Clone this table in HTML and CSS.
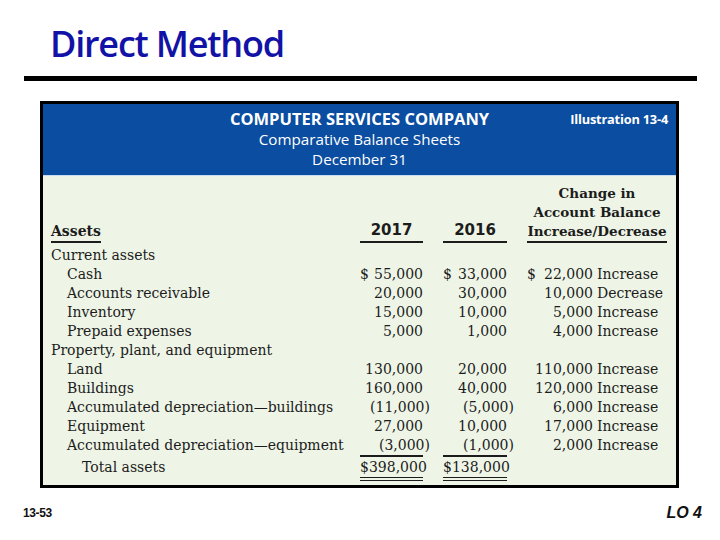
FILE: index.html
```html
<!DOCTYPE html>
<html>
<head>
<meta charset="utf-8">
<link rel="stylesheet" href="styles.css">
</head>
<body>
<div class="slide">
  <h1 class="title">Direct Method</h1>
  <div class="rule"></div>
  <div class="panel">
    <div class="panel-head">
      <div class="head-side"></div>
      <div class="company">
        <div class="co-name">COMPUTER SERVICES COMPANY</div>
        <div class="co-sub">Comparative Balance Sheets</div>
        <div class="co-sub">December 31</div>
      </div>
      <div class="head-side illus">Illustration 13-4</div>
    </div>
    <div class="sheet">
      <div class="hcell label-head"><span class="assets">Assets</span></div>
      <div class="hcell year">2017</div>
      <div class="hcell year">2016</div>
      <div class="hcell change-head"><span class="ch-text">Change in<br>Account Balance<br>Increase/Decrease</span></div>

      <div class="lbl">Current assets</div><div></div><div></div><div></div>

      <div class="lbl ind">Cash</div>
      <div class="num dollar"><span>$</span><span>55,000</span></div>
      <div class="num dollar"><span>$</span><span>33,000</span></div>
      <div class="chg"><span class="chn dollar"><span>$</span><span>22,000</span></span><span>Increase</span></div>

      <div class="lbl ind">Accounts receivable</div>
      <div class="num">20,000</div>
      <div class="num">30,000</div>
      <div class="chg"><span class="chn">10,000</span><span>Decrease</span></div>

      <div class="lbl ind">Inventory</div>
      <div class="num">15,000</div>
      <div class="num">10,000</div>
      <div class="chg"><span class="chn">5,000</span><span>Increase</span></div>

      <div class="lbl ind">Prepaid expenses</div>
      <div class="num">5,000</div>
      <div class="num">1,000</div>
      <div class="chg"><span class="chn">4,000</span><span>Increase</span></div>

      <div class="lbl">Property, plant, and equipment</div><div></div><div></div><div></div>

      <div class="lbl ind">Land</div>
      <div class="num">130,000</div>
      <div class="num">20,000</div>
      <div class="chg"><span class="chn">110,000</span><span>Increase</span></div>

      <div class="lbl ind">Buildings</div>
      <div class="num">160,000</div>
      <div class="num">40,000</div>
      <div class="chg"><span class="chn">120,000</span><span>Increase</span></div>

      <div class="lbl ind">Accumulated depreciation—buildings</div>
      <div class="num">(11,000<span class="rp">)</span></div>
      <div class="num">(5,000<span class="rp">)</span></div>
      <div class="chg"><span class="chn">6,000</span><span>Increase</span></div>

      <div class="lbl ind">Equipment</div>
      <div class="num">27,000</div>
      <div class="num">10,000</div>
      <div class="chg"><span class="chn">17,000</span><span>Increase</span></div>

      <div class="lbl ind">Accumulated depreciation—equipment</div>
      <div class="num">(3,000<span class="rp">)</span></div>
      <div class="num">(1,000<span class="rp">)</span></div>
      <div class="chg"><span class="chn">2,000</span><span>Increase</span></div>

      <div class="lbl total-lbl">Total assets</div>
      <div class="num total">$398,000</div>
      <div class="num total">$138,000</div>
      <div></div>
    </div>
  </div>
  <div class="footer">
    <span class="pg">13-53</span>
    <span class="lo">LO 4</span>
  </div>
</div>
</body>
</html>
```
FILE: styles.css
```css
html, body {
  margin: 0;
  padding: 0;
  background: #ffffff;
}
.slide {
  width: 720px;
  height: 540px;
  overflow: hidden;
  display: flex;
  flex-direction: column;
}
.title {
  margin: 24px 0 0 50px;
  font-family: "Open Sans", "Liberation Sans", sans-serif;
  font-weight: 600;
  font-size: 36px;
  line-height: 40px;
  letter-spacing: -1.2px;
  color: #1212a6;
}
.rule {
  margin: 12px 0 0 24px;
  width: 673px;
  height: 5px;
  background: #000;
}
.panel {
  margin: 20px 0 0 40px;
  width: 633px;
  border: 3px solid #000;
  background: #eef5e7;
}
.panel-head {
  background: #0b4da1;
  color: #fff;
  display: grid;
  grid-template-columns: 1fr auto 1fr;
  padding: 5px 8px 6px;
  border-bottom: 1px solid #c9dbef;
  font-family: "Open Sans", "Noto Sans", sans-serif;
}
.company {
  text-align: center;
}
.co-name {
  font-weight: 700;
  font-size: 16.5px;
  line-height: 20px;
}
.co-sub {
  font-size: 15.2px;
  line-height: 20px;
}
.illus {
  text-align: right;
  font-family: "Open Sans", "Liberation Sans", sans-serif;
  font-weight: 700;
  font-size: 12.8px;
  line-height: 20px;
  letter-spacing: -0.2px;
}
.sheet {
  display: grid;
  grid-template-columns: 289px 63px 64px 140px;
  column-gap: 20px;
  padding: 8px 9px 4px 8px;
  font-family: "DejaVu Serif", "Liberation Serif", serif;
  font-size: 14px;
  line-height: 19px;
  color: #1c1c1c;
}
.hcell {
  align-self: end;
  margin-bottom: 3px;
}
.assets {
  display: inline-block;
  font-weight: 700;
  border-bottom: 2px solid #1c1c1c;
  padding-bottom: 0;
}
.year {
  text-align: center;
  font-family: "DejaVu Sans", "Liberation Sans", sans-serif;
  font-weight: 700;
  font-size: 15px;
  line-height: 22px;
  border-bottom: 2px solid #1c1c1c;
  padding-bottom: 0;
}
.change-head {
  text-align: center;
}
.ch-text {
  display: inline-block;
  font-weight: 700;
  font-size: 13.5px;
  border-bottom: 2px solid #1c1c1c;
}
.lbl {
  white-space: nowrap;
}
.ind {
  padding-left: 16px;
}
.total-lbl {
  padding-left: 31px;
  padding-top: 3px;
}
.num {
  text-align: right;
  white-space: nowrap;
}
.dollar {
  display: flex;
  justify-content: space-between;
}
.rp {
  display: inline-block;
  margin-right: -7px;
}
.total {
  border-top: 2px solid #1c1c1c;
  border-bottom: 4px double #1c1c1c;
  padding-top: 1px;
}
.chg {
  display: flex;
  gap: 4px;
  white-space: nowrap;
}
.chn {
  width: 66px;
  text-align: right;
  flex: none;
}
.footer {
  display: flex;
  justify-content: space-between;
  align-items: center;
  padding: 16px 18px 0 23px;
}
.pg {
  font-family: "Liberation Sans", sans-serif;
  font-weight: 700;
  font-size: 12px;
  letter-spacing: -0.4px;
  color: #111;
}
.lo {
  font-family: "Liberation Sans", sans-serif;
  font-weight: 700;
  font-style: italic;
  font-size: 16px;
  color: #111;
}
```
